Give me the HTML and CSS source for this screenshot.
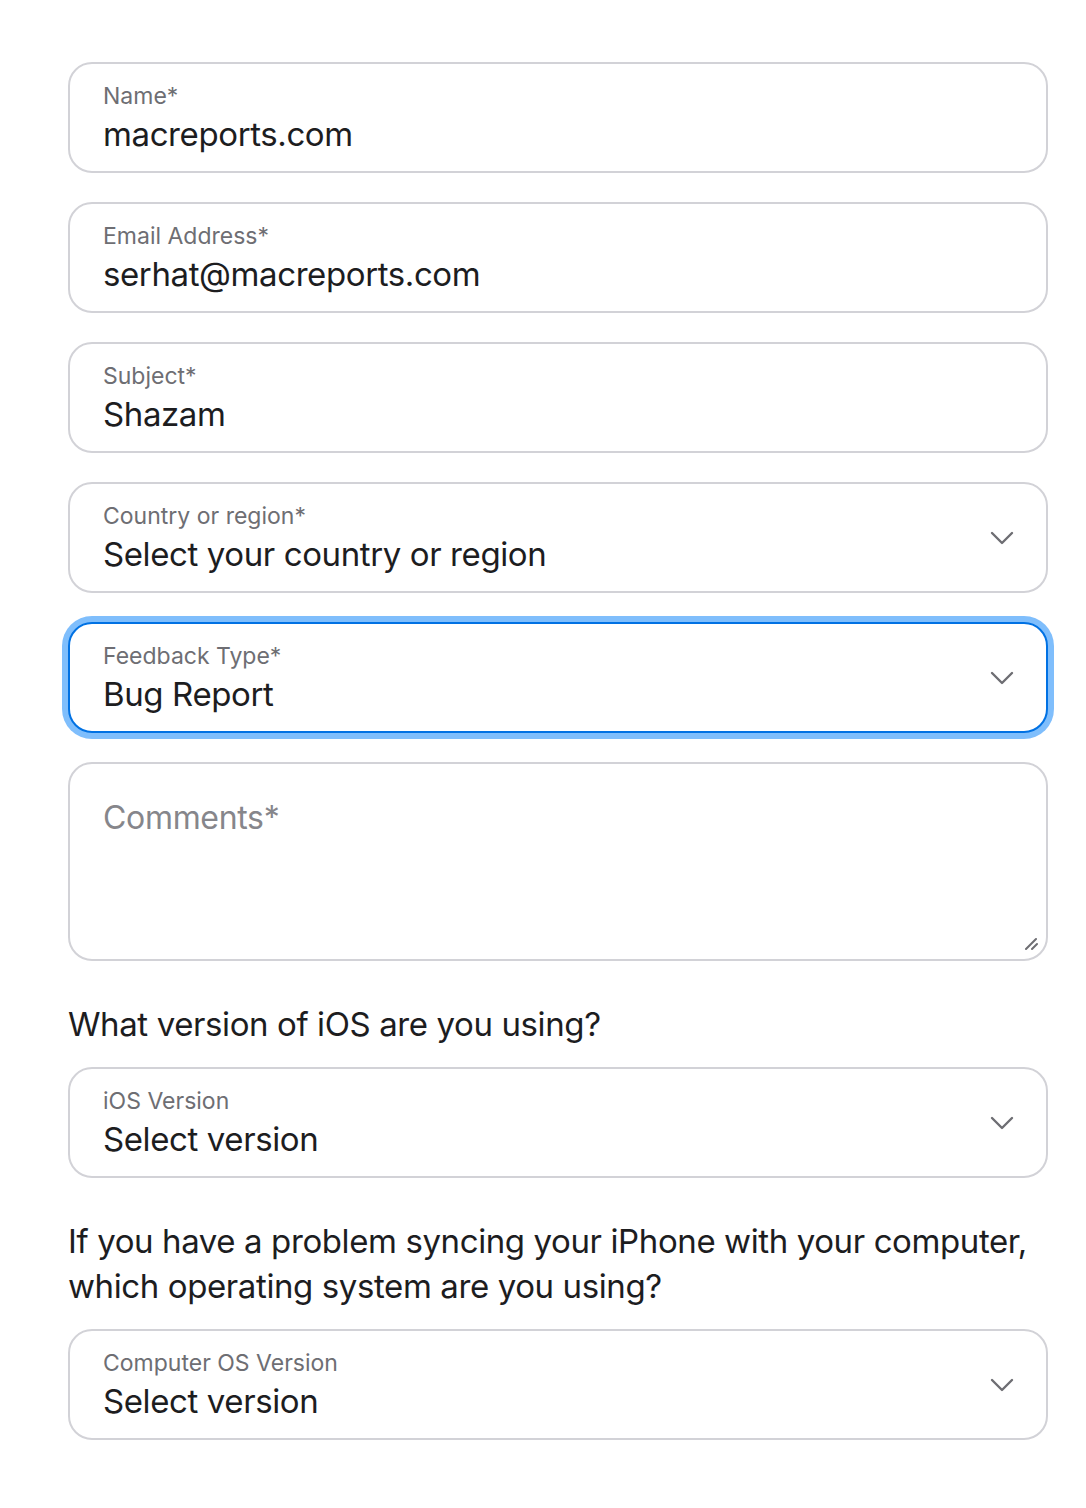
FILE: index.html
```html
<!DOCTYPE html>
<html lang="en">
<head>
    <meta charset="UTF-8">
    <meta name="viewport" content="width=device-width, initial-scale=1.0">
    <title>Feedback</title>
    <link rel="stylesheet" href="styles.css">
</head>
<body>
    <form class="form">
        <!-- Text fields -->
        <div class="field">
            <span class="field-label">Name*</span>
            <span class="field-value">macreports.com</span>
        </div>
        <div class="field">
            <span class="field-label">Email Address*</span>
            <span class="field-value">serhat@macreports.com</span>
        </div>
        <div class="field">
            <span class="field-label">Subject*</span>
            <span class="field-value">Shazam</span>
        </div>

        <!-- Dropdowns -->
        <div class="field select">
            <span class="field-label">Country or region*</span>
            <span class="field-value">Select your country or region</span>
            <svg class="chevron" width="24" height="14" viewBox="0 0 24 14"><path d="M2 2l10 10 10-10" fill="none" stroke="#6e6e73" stroke-width="2.4" stroke-linecap="round" stroke-linejoin="round"/></svg>
        </div>
        <div class="field select focused">
            <span class="field-label">Feedback Type*</span>
            <span class="field-value">Bug Report</span>
            <svg class="chevron" width="24" height="14" viewBox="0 0 24 14"><path d="M2 2l10 10 10-10" fill="none" stroke="#6e6e73" stroke-width="2.4" stroke-linecap="round" stroke-linejoin="round"/></svg>
        </div>

        <!-- Comments -->
        <div class="field textarea">
            <span class="placeholder">Comments*</span>
            <svg class="resize" width="16" height="16" viewBox="0 0 16 16"><path d="M14 4L4 14M15 9l-5 5" fill="none" stroke="#6e6e73" stroke-width="2" stroke-linecap="round"/></svg>
        </div>

        <p class="question">What version of iOS are you using?</p>
        <div class="field select">
            <span class="field-label">iOS Version</span>
            <span class="field-value">Select version</span>
            <svg class="chevron" width="24" height="14" viewBox="0 0 24 14"><path d="M2 2l10 10 10-10" fill="none" stroke="#6e6e73" stroke-width="2.4" stroke-linecap="round" stroke-linejoin="round"/></svg>
        </div>

        <p class="question">If you have a problem syncing your iPhone with your computer, which operating system are you using?</p>
        <div class="field select">
            <span class="field-label">Computer OS Version</span>
            <span class="field-value">Select version</span>
            <svg class="chevron" width="24" height="14" viewBox="0 0 24 14"><path d="M2 2l10 10 10-10" fill="none" stroke="#6e6e73" stroke-width="2.4" stroke-linecap="round" stroke-linejoin="round"/></svg>
        </div>
    </form>
</body>
</html>
```

FILE: styles.css
```css
/* Page */
body {
    margin: 0;
    background-color: #fff;
    font-family: Inter, "Noto Sans", sans-serif;
    color: #1d1d1f;
}

.form {
    display: flex;
    flex-direction: column;
    gap: 29px;
    width: 980px;
    padding: 62px 0 60px 68px;
}

.field {
    position: relative;
    display: flex;
    flex-direction: column;
    box-sizing: border-box;
    height: 111px;
    padding: 18px 33px 0;
    border: 2px solid #d2d2d7;
    border-radius: 24px;
    background-color: #fff;
}

.field-label {
    font-size: 23px;
    line-height: 28px;
    color: #6e6e73;
}

.field-value {
    margin-top: 4px;
    font-size: 33px;
    line-height: 40px;
    letter-spacing: -0.012em;
    color: #1d1d1f;
}

.focused {
    border-color: #0071e3;
    box-shadow: 0 0 0 6px rgba(0, 125, 250, 0.5);
}

.chevron {
    position: absolute;
    right: 32px;
    top: 50%;
    margin-top: -7px;
}

.textarea {
    height: 199px;
    padding-top: 34px;
}

.placeholder {
    font-size: 32px;
    line-height: 40px;
    letter-spacing: -0.01em;
    color: #86868b;
}

.resize {
    position: absolute;
    right: 8px;
    bottom: 8px;
}

.question {
    margin: 12px 0 -9px;
    font-size: 33px;
    line-height: 45px;
    letter-spacing: -0.012em;
}
```
